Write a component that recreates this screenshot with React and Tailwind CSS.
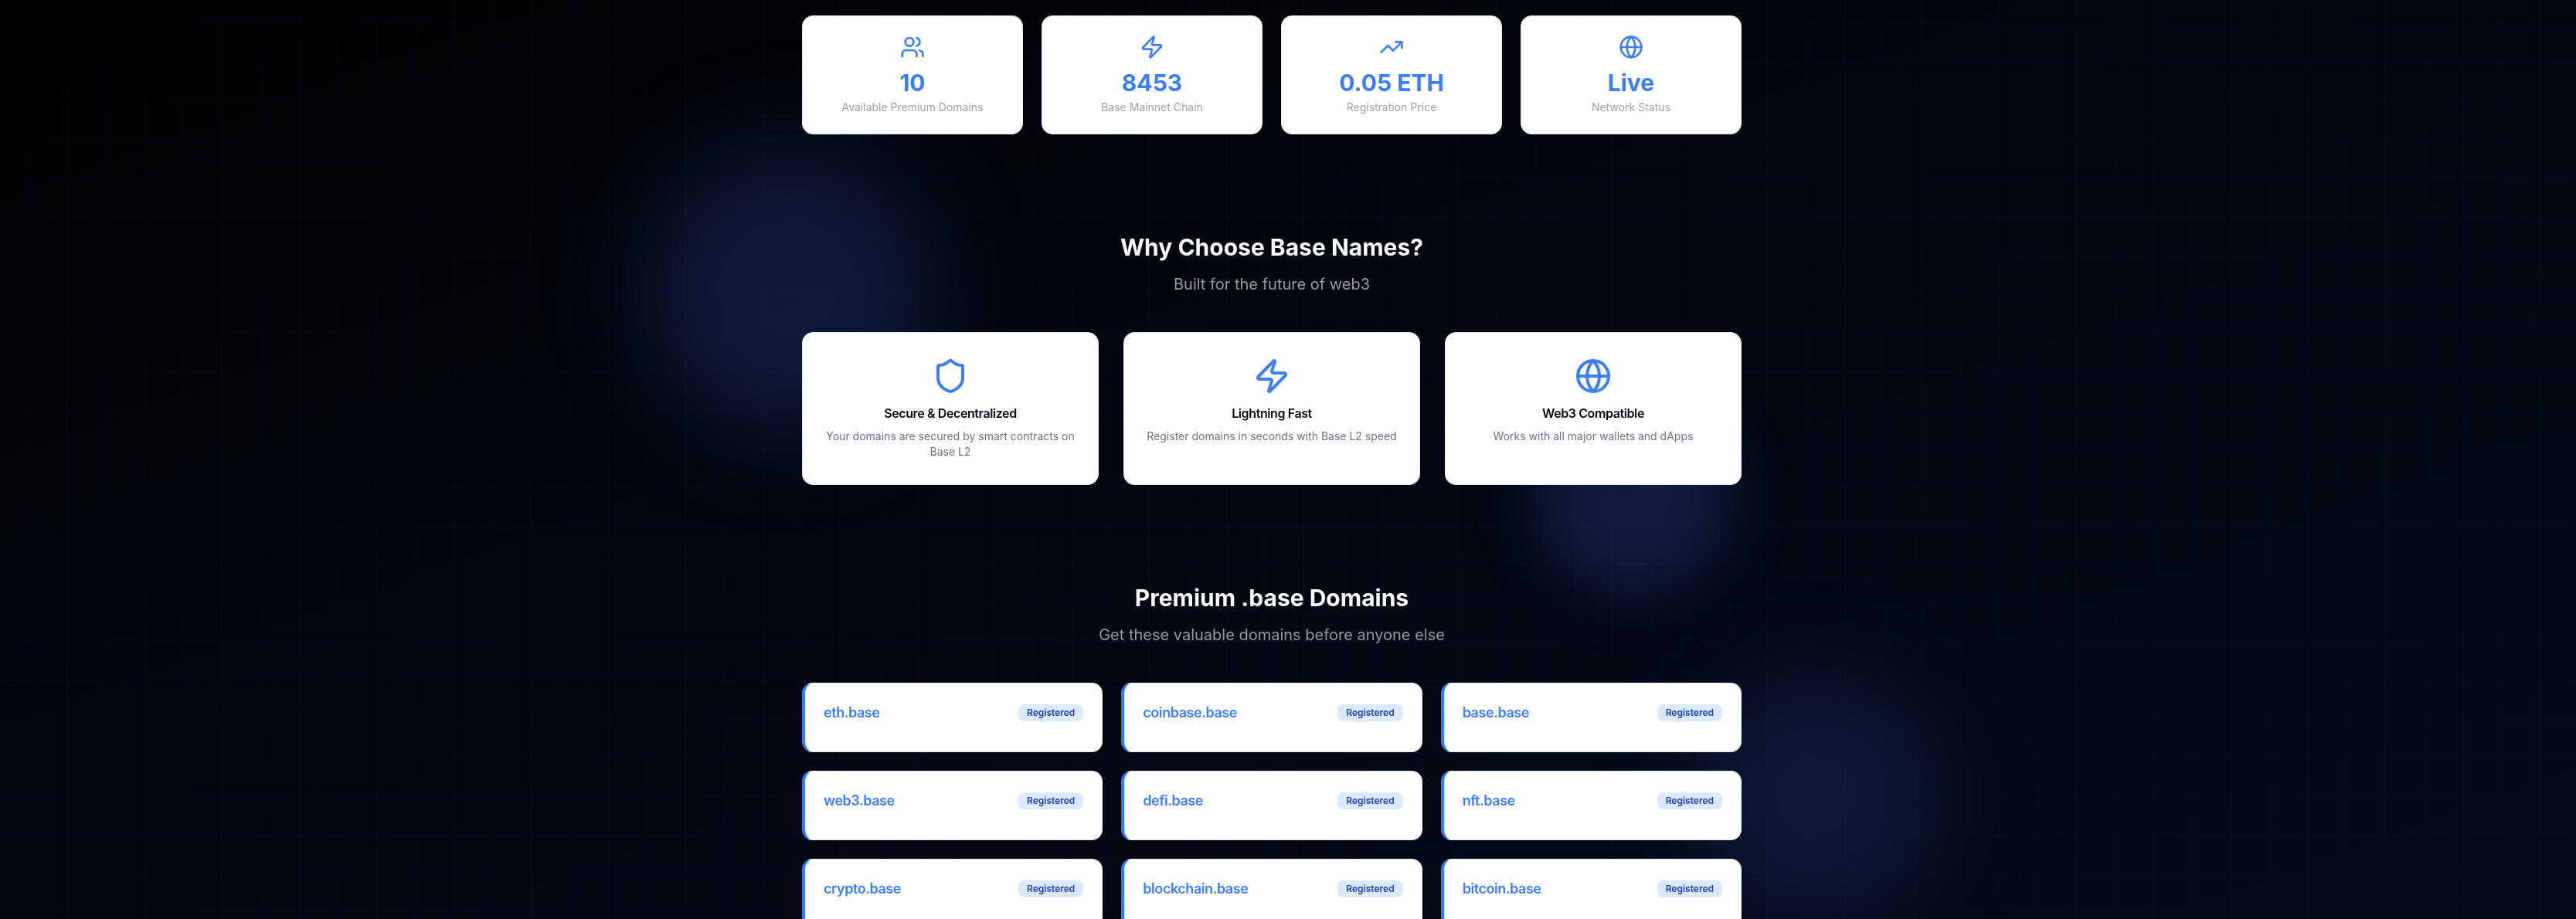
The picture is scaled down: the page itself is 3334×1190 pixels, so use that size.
import { Globe, Shield, TrendingUp, Users, Zap } from "lucide-react";

const stats = [
  { icon: Users, value: "10", label: "Available Premium Domains" },
  { icon: Zap, value: "8453", label: "Base Mainnet Chain" },
  { icon: TrendingUp, value: "0.05 ETH", label: "Registration Price" },
  { icon: Globe, value: "Live", label: "Network Status" },
];

const features = [
  {
    icon: Shield,
    title: "Secure & Decentralized",
    text: "Your domains are secured by smart contracts on Base L2",
  },
  {
    icon: Zap,
    title: "Lightning Fast",
    text: "Register domains in seconds with Base L2 speed",
  },
  {
    icon: Globe,
    title: "Web3 Compatible",
    text: "Works with all major wallets and dApps",
  },
];

const domains = [
  "eth.base",
  "coinbase.base",
  "base.base",
  "web3.base",
  "defi.base",
  "nft.base",
  "crypto.base",
  "blockchain.base",
  "bitcoin.base",
];

function Backdrop() {
  return (
    <div
      aria-hidden="true"
      className="pointer-events-none fixed inset-0 overflow-hidden bg-linear-to-br/srgb from-black via-[#030712] to-[#040a1a]"
    >
      <div className="absolute inset-0 bg-[linear-gradient(rgba(20,50,255,0.04)_1px,transparent_1px),linear-gradient(90deg,rgba(20,50,255,0.04)_1px,transparent_1px)] bg-[size:50px_50px] bg-position-[37px_30px]" />
      <div className="absolute top-[180px] left-[828px] size-96 rounded-full bg-[#3b6cf0]/20 blur-3xl" />
      <div className="absolute top-[515px] left-[1985px] size-64 rounded-full bg-[#3b70f0]/20 blur-2xl" />
      <div className="absolute top-[870px] left-[2190px] size-80 rounded-full bg-[#3b78f6]/15 blur-3xl" />
    </div>
  );
}

function SectionHeader({ title, subtitle }) {
  return (
    <header className="mb-12 text-center">
      <h2 className="mb-4 text-3xl font-bold text-neutral-50">{title}</h2>
      <p className="text-xl text-[#999999]">{subtitle}</p>
    </header>
  );
}

export default function App() {
  return (
    <div className="min-h-screen bg-black font-['Inter',sans-serif]">
      <Backdrop />
      <div className="relative h-screen overflow-y-auto pr-[42px] [scrollbar-width:none]">
        <main className="mx-auto max-w-7xl px-8">
          <section className="grid grid-cols-4 gap-6 pt-5 pb-16">
            {stats.map(({ icon: Icon, value, label }) => (
              <div
                key={label}
                className="rounded-[14px] border border-gray-200 bg-white p-6 text-center"
              >
                <Icon className="mx-auto mb-3 size-8 text-[#3c7eff]" />
                <div className="text-3xl font-bold text-[#3c7eff]">{value}</div>
                <div className="mt-1 text-sm text-neutral-400">{label}</div>
              </div>
            ))}
          </section>

          <section className="py-16">
            <SectionHeader
              title="Why Choose Base Names?"
              subtitle="Built for the future of web3"
            />
            <div className="grid grid-cols-3 gap-8">
              {features.map(({ icon: Icon, title, text }) => (
                <div
                  key={title}
                  className="rounded-[14px] border border-gray-200 bg-white px-6 py-8 text-center"
                >
                  <Icon className="mx-auto mb-3 size-12 text-[#3c7eff]" />
                  <h3 className="mb-2 text-base font-semibold tracking-tight text-gray-950">
                    {title}
                  </h3>
                  <p className="text-sm text-gray-500">{text}</p>
                </div>
              ))}
            </div>
          </section>

          <section className="py-16">
            <SectionHeader
              title="Premium .base Domains"
              subtitle="Get these valuable domains before anyone else"
            />
            <ul className="grid grid-cols-3 gap-6">
              {domains.map((name) => (
                <li
                  key={name}
                  className="rounded-[14px] border border-l-4 border-gray-200 border-l-[#2b7fff] bg-white px-6 pt-6 pb-9"
                >
                  <div className="flex items-center justify-between">
                    <h3 className="text-lg font-semibold tracking-tight text-[#3c7eff]">
                      {name}
                    </h3>
                    <span className="rounded-lg border border-transparent bg-blue-100 px-2.5 py-0.5 text-xs font-semibold text-blue-800">
                      Registered
                    </span>
                  </div>
                </li>
              ))}
            </ul>
          </section>
        </main>
      </div>
    </div>
  );
}
